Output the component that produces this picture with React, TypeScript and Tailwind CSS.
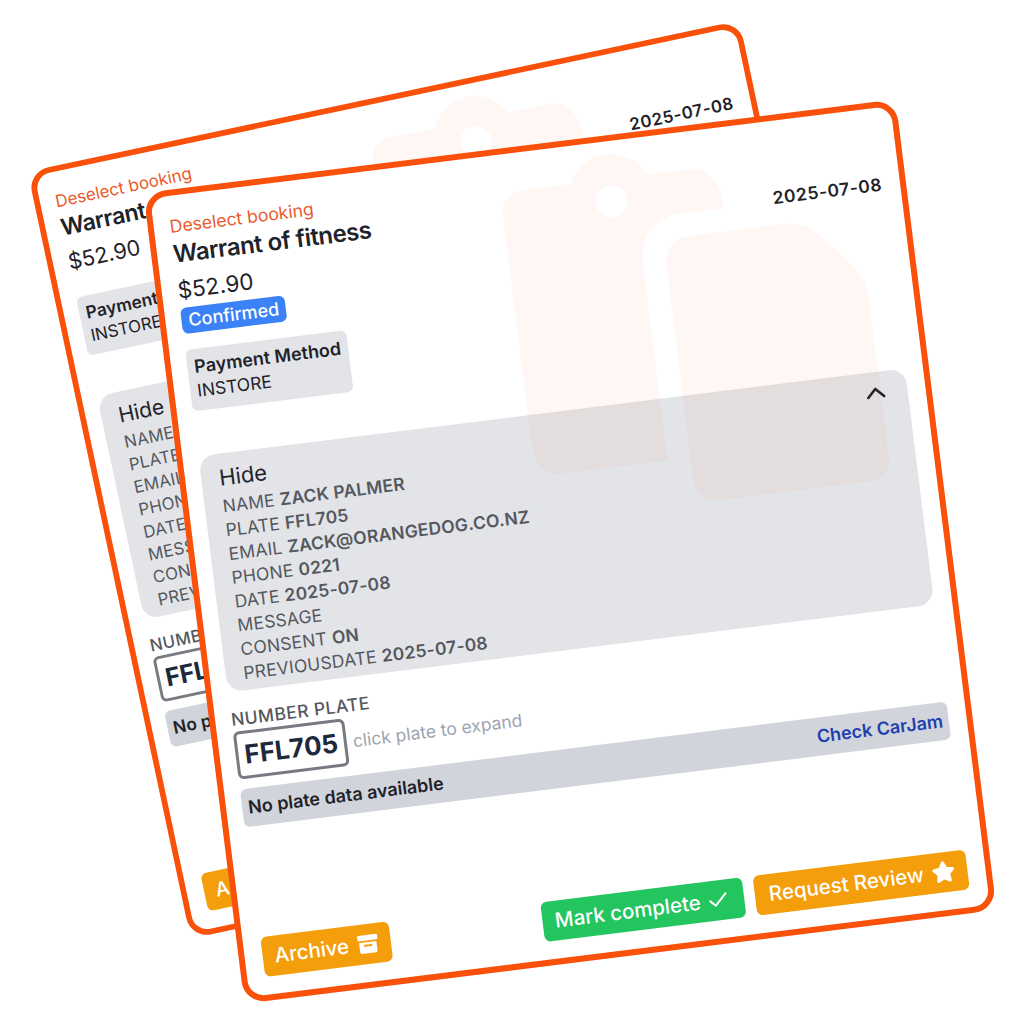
import { Check, ChevronUp, Star } from "lucide-react";

const details: [string, string][] = [
  ["Name", "Zack Palmer"],
  ["Plate", "FFL705"],
  ["Email", "zack@orangedog.co.nz"],
  ["Phone", "0221"],
  ["Date", "2025-07-08"],
  ["Message", ""],
  ["Consent", "on"],
  ["PreviousDate", "2025-07-08"],
];

/* Faded price tags behind the card content */
function TagsWatermark() {
  return (
    <svg
      viewBox="0 0 753 811"
      className="pointer-events-none absolute -top-1 -left-1 h-[811px] w-[753px]"
    >
      <path
        fillRule="evenodd"
        fill="#f9500a"
        fillOpacity="0.045"
        d="M377 42H423A42 42 0 0 1 500 42H543Q572 42 572 85H528Q485 87 485 135V328H377Q352 328 352 293V66Q352 42 377 42ZM461.5 48A16 16 0 1 0 461.5 80A16 16 0 1 0 461.5 48Z"
      />
      <path
        fill="#f9500a"
        fillOpacity="0.045"
        d="M536 108H630Q650 108 665 125L695 160Q705 175 705 193V350Q705 374 680 374H533Q508 374 508 346V138Q508 108 536 108Z"
      />
    </svg>
  );
}

function ArchiveIcon() {
  return (
    <svg viewBox="0 0 24 24" className="h-[22px] w-[22px]" fill="currentColor">
      <rect x="1" y="2" width="22" height="6" rx="1.5" />
      <path
        fillRule="evenodd"
        d="M2.5 10h19v10a2 2 0 0 1-2 2h-15a2 2 0 0 1-2-2zM8.5 12.5a1 1 0 0 0 0 2.2h7a1 1 0 0 0 0-2.2z"
      />
    </svg>
  );
}

function BookingCard({ confirmed, className }: { confirmed?: boolean; className: string }) {
  return (
    <div
      className={`absolute flex h-[817px] w-[758px] flex-col rounded-[22px] border-[6px] border-[#f9500a] bg-white py-4 pr-[18px] pl-4 font-['Inter',sans-serif] text-[#1f2329] ${className}`}
    >
      <div className="flex items-start justify-between pt-[3px]">
        <div>
          <div className="text-[17.6px] leading-6 text-[#ea5a2b]">Deselect booking</div>
          <div className="text-2xl leading-8 font-semibold tracking-[-0.5px]">Warrant of fitness</div>
          <div className="mt-1 text-[22.5px] leading-8">$52.90</div>
        </div>
        <div className="mt-[46px] text-[17.5px] leading-6 font-semibold tracking-[0.55px]">2025-07-08</div>
      </div>

      {confirmed && (
        <div className="mt-0.5 w-fit rounded-md bg-[#3b82f6] px-[7px] text-lg leading-[26px] font-medium text-white">
          Confirmed
        </div>
      )}

      <div className={`w-fit rounded-md bg-[#e2e4e8] px-[7px] pt-[7px] pb-2.5 ${confirmed ? "mt-4" : "mt-[22px]"}`}>
        <div className="text-lg leading-[22px] font-semibold">Payment Method</div>
        <div className="mt-0.5 text-[17.5px] leading-[21px]">INSTORE</div>
      </div>

      <div className={`relative rounded-2xl bg-[#e2e4e8] px-4 pt-2.5 pb-[5px] ${confirmed ? "mt-[45px]" : "mt-[43px]"}`}>
        <ChevronUp className="absolute top-[5px] right-4 h-8 w-8" strokeWidth={2} />
        <div className="ml-0.5 text-[22px] leading-7">Hide</div>
        <div className="mt-[3px] ml-0.5 text-[17.5px] leading-6 tracking-[0.2px] text-[#55585e] uppercase">
          {details.map(([label, value]) => (
            <div key={label} className="h-6">
              {label} <span className="font-semibold">{value}</span>
            </div>
          ))}
        </div>
      </div>

      <div className="mt-4 text-[17.5px] leading-6 font-medium tracking-wide text-[#55585e] uppercase">
        Number plate
      </div>
      <div className="flex items-center gap-1.5">
        <div className="rounded-md border-[3px] border-[#777a80] px-1.5 text-[26px] leading-[42px] font-bold text-[#1e293b]">
          FFL705
        </div>
        <div className="text-[17.5px] text-[#9ca3af]">click plate to expand</div>
      </div>
      <div className="mt-2.5 flex h-[38px] items-center justify-between rounded-md bg-[#d1d5db] px-1.5 text-lg font-semibold">
        <span>No plate data available</span>
        <span className="text-[#1e40af]">Check CarJam</span>
      </div>

      <div className="mt-auto mb-0.5 flex items-center justify-between">
        <button className="ml-0.5 flex h-10 items-center gap-2 rounded-md bg-[#f59e0b] px-3 text-[20.5px] font-medium text-white">
          Archive <ArchiveIcon />
        </button>
        <div className="flex gap-[11px]">
          <button className="flex h-10 items-center gap-1.5 rounded-md bg-[#22c55e] pr-3.5 pl-3 text-[20.5px] font-medium text-white">
            Mark complete <Check className="h-6 w-6" strokeWidth={2} />
          </button>
          <button className="flex h-10 items-center gap-2 rounded-md bg-[#f59e0b] pr-3 pl-3.5 text-[20.5px] font-medium text-white">
            Request Review <Star className="h-6 w-6 fill-white" />
          </button>
        </div>
      </div>

      <TagsWatermark />
    </div>
  );
}

export default function App() {
  return (
    <div className="relative h-[1024px] w-[1024px] overflow-hidden bg-white">
      <BookingCard className="top-[71px] left-[86px] scale-[.96] rotate-[-12deg]" />
      <BookingCard confirmed className="top-[142.5px] left-[191px] rotate-[-7.1deg]" />
    </div>
  );
}
